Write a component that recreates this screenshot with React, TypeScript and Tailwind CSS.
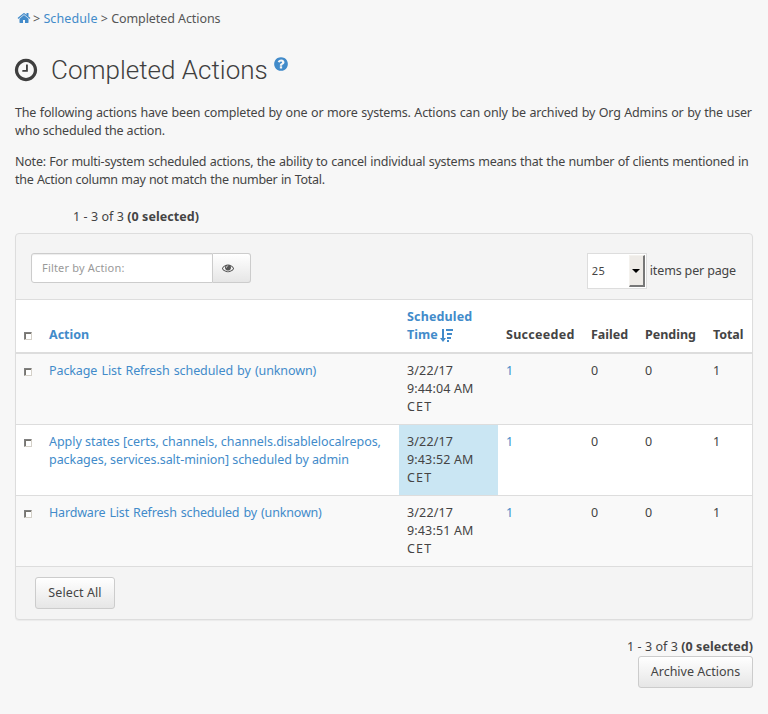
import React from "react";

const link = "text-[#428bca]";

function Fa({ d, className }: { d: string; className: string }) {
  return (
    <svg viewBox="0 0 1792 1792" fill="currentColor" className={className}>
      <path d={d} />
    </svg>
  );
}

const HOME =
  "M1472 992v480q0 26-19 45t-45 19h-384v-384h-256v384h-384q-26 0-45-19t-19-45v-480q0-1 .5-3t.5-3l575-474 575 474q1 2 1 6zm223-69l-62 74q-8 9-21 11h-3q-13 0-21-7l-692-577-692 577q-12 8-24 7-13-2-21-11l-62-74q-8-10-7-23.5t11-21.5l719-599q32-26 76-26t76 26l244 204v-195q0-14 9-23t23-9h192q14 0 23 9t9 23v408l219 182q10 8 11 21.5t-7 23.5z";
const CLOCK =
  "M1024 544v448q0 14-9 23t-23 9h-320q-14 0-23-9t-9-23v-64q0-14 9-23t23-9h224v-352q0-14 9-23t23-9h64q14 0 23 9t9 23zm416 352q0-148-73-273t-198-198-273-73-273 73-198 198-73 273 73 273 198 198 273 73 273-73 198-198 73-273zm224 0q0 209-103 385.5t-279.5 279.5-385.5 103-385.5-103-279.5-279.5-103-385.5 103-385.5 279.5-279.5 385.5-103 385.5 103 279.5 279.5 103 385.5z";
const HELP =
  "M1024 1376v-192q0-14-9-23t-23-9h-192q-14 0-23 9t-9 23v192q0 14 9 23t23 9h192q14 0 23-9t9-23zm256-672q0-88-55.5-163t-138.5-116-170-41q-243 0-371 213-15 24 8 42l132 100q7 6 19 6 16 0 25-12 53-68 86-92 34-24 86-24 48 0 85.5 26t37.5 59q0 38-20 61t-68 45q-63 28-115.5 86.5t-52.5 125.5v36q0 14 9 23t23 9h192q14 0 23-9t9-23q0-19 21.5-49.5t54.5-49.5q32-18 49-28.5t46-35 44.5-48 28-60.5 12.5-81zm384 192q0 209-103 385.5t-279.5 279.5-385.5 103-385.5-103-279.5-279.5-103-385.5 103-385.5 279.5-279.5 385.5-103 385.5 103 279.5 279.5 103 385.5z";
const EYE =
  "M1664 960q-152-236-381-353 61 104 61 225 0 185-131.5 316.5t-316.5 131.5-316.5-131.5-131.5-316.5q0-121 61-225-229 117-381 353 133 205 333.5 326.5t434.5 121.5 434.5-121.5 333.5-326.5zm-720-384q0-20-14-34t-34-14q-125 0-214.5 89.5t-89.5 214.5q0 20 14 34t34 14 34-14 14-34q0-86 61-147t147-61q20 0 34-14t14-34zm848 384q0 34-20 69-140 230-376.5 368.5t-499.5 138.5-499.5-139-376.5-368q-20-35-20-69t20-69q140-229 376.5-368t499.5-139 499.5 139 376.5 368q20 35 20 69z";

function Check() {
  return (
    <span className="block size-2 border border-[#d4d0c8] border-t-[#808080] border-l-[#808080] bg-white shadow-[inset_1px_1px_0_#77756f]" />
  );
}

const cols = "grid grid-cols-[25px_358px_99px_85px_54px_68px_47px]";

function Row({
  lines,
  time,
  shade,
  mark,
}: {
  lines: { text: string; spacing: string }[];
  time: string;
  shade?: boolean;
  mark?: boolean;
}) {
  return (
    <div className={`${cols} h-[71px] border-b border-[#ddd] ${shade ? "bg-[#f9f9f9]" : "bg-white"}`}>
      <div className="pt-[14px] pl-2">
        <Check />
      </div>
      <div className={`pt-2 pl-2 ${link}`}>
        {lines.map((l) => (
          <div key={l.text} className={l.spacing}>
            {l.text}
          </div>
        ))}
      </div>
      <div className={`pt-2 pl-2 tracking-[0.15px] ${mark ? "bg-[#cae6f3]" : ""}`}>
        <div>3/22/17</div>
        <div>{time} AM</div>
        <div className="tracking-[1.2px]">CET</div>
      </div>
      <div className={`pt-2 pl-2 ${link}`}>1</div>
      <div className="pt-2 pl-2">0</div>
      <div className="pt-2 pl-2">0</div>
      <div className="pt-2 pl-2">1</div>
    </div>
  );
}

const button =
  "flex h-8 items-center justify-center rounded-[3px] border border-[#ccc] bg-linear-to-b from-white to-[#e6e6e6] text-[#444] shadow-[inset_0_1px_0_#fff]";

export default function App() {
  return (
    <div className="h-[714px] w-[768px] bg-[#f7f7f7] px-[15px] font-['Noto_Sans',sans-serif] text-[12.5px] leading-[18px] whitespace-nowrap text-[#444]">
      <nav className="flex h-7 items-end pl-[2px] text-[#555]">
        <Fa d={HOME} className={`mb-[3px] size-[14px] ${link}`} />
        <span className="ml-[2px]">
          &gt; <a className={`${link} tracking-[0.1px]`}>Schedule</a> &gt; <span className="tracking-[-0.08px]">Completed Actions</span>
        </span>
      </nav>
      <h1 className="mt-[25px] flex h-9 font-['Roboto',sans-serif] text-[26px] leading-[35px] font-light text-[#3f3f3f]">
        <Fa d={CLOCK} className="mt-1 -ml-[2px] size-[26px]" />
        <span className="ml-3">Completed Actions</span>
        <Fa d={HELP} className={`mt-[3px] ml-[5px] size-4 ${link}`} />
      </h1>
      <div className="mt-[15px]">
        <div className="tracking-[-0.165px] [word-spacing:0.5px]">
          The following actions have been completed by one or more systems. Actions can only be archived by Org Admins or by the user
        </div>
        <div className="tracking-[-0.15px]">who scheduled the action.</div>
      </div>
      <div className="mt-[13px]">
        <div className="tracking-[-0.23px] [word-spacing:0.5px]">
          Note: For multi-system scheduled actions, the ability to cancel individual systems means that the number of clients mentioned in
        </div>
        <div className="tracking-[-0.29px] [word-spacing:0.5px]">the Action column may not match the number in Total.</div>
      </div>
      <div className="mt-[19px] pl-[58px] tracking-[0.06px]">
        1 - 3 of 3 <b>(0 selected)</b>
      </div>
      <section className="mt-[7px] h-[387px] w-[738px] rounded-[4px] border border-[#ddd] bg-[#f4f4f4] shadow-[0_1px_1px_rgba(0,0,0,0.05)]">
        <div className="flex h-[66px] items-start justify-between border-b border-[#ddd] pt-[19px] pr-4 pl-[15px]">
          <div className="flex h-[30px] text-[11px]">
            <div className="flex w-[182px] items-center rounded-l-[3px] border border-[#ccc] bg-white pl-[10px] tracking-[0.18px] text-[#999] shadow-[inset_0_1px_1px_rgba(0,0,0,0.075)]">
              Filter by Action:
            </div>
            <div className="flex w-[38px] items-center rounded-r-[3px] border border-l-0 border-[#ccc] bg-linear-to-b from-white to-[#e6e6e6] pl-[9px]">
              <Fa d={EYE} className="size-3 text-[#555]" />
            </div>
          </div>
          <div className="flex items-center">
            <div className="flex h-9 w-[60px] items-center justify-between border border-[#ddd] bg-white pr-[1px] pl-1 text-[11px]">
              <span className="tracking-[0.3px]">25</span>
              <span className="flex h-8 w-4 items-center justify-center border-t border-r-2 border-b-2 border-l border-t-[#f4f2ee] border-r-[#777] border-b-[#777] border-l-[#f4f2ee] bg-[#eeebe7]">
                <span className="border-x-4 border-t-4 border-x-transparent border-t-black" />
              </span>
            </div>
            <span className="ml-[3px] tracking-[-0.15px]">items per page</span>
          </div>
        </div>
        <div className={`${cols} h-[54px] border-b-2 border-[#ddd] bg-white font-bold`}>
          <div className="pt-8 pl-2">
            <Check />
          </div>
          <div className={`pt-[26px] pl-2 ${link}`}>Action</div>
          <div className={`pt-2 pl-2 ${link}`}>
            <div className="tracking-[0.15px]">Scheduled</div>
            <div className="flex items-center">
              Time
              <svg viewBox="0 0 13 13" className="ml-[2px] size-[13px]" fill="currentColor">
                <path d="M2 0h2v9h2l-3 4-3-4h2zM6 0h7v2H6zM7 4h5v2H7zM7 8h4v2H7zM7 11h2v2H7z" />
              </svg>
            </div>
          </div>
          <div className="pt-[26px] pl-2 tracking-[0.28px]">Succeeded</div>
          <div className="pt-[26px] pl-2">Failed</div>
          <div className="pt-[26px] pl-2">Pending</div>
          <div className="pt-[26px] pl-2 tracking-[-0.1px]">Total</div>
        </div>
        <Row
          shade
          lines={[{ text: "Package List Refresh scheduled by (unknown)", spacing: "tracking-[-0.1px] [word-spacing:1px]" }]}
          time="9:44:04"
        />
        <Row
          mark
          lines={[
            { text: "Apply states [certs, channels, channels.disablelocalrepos,", spacing: "tracking-[-0.04px]" },
            { text: "packages, services.salt-minion] scheduled by admin", spacing: "tracking-[-0.06px]" },
          ]}
          time="9:43:52"
        />
        <Row
          shade
          lines={[{ text: "Hardware List Refresh scheduled by (unknown)", spacing: "tracking-[-0.17px] [word-spacing:1px]" }]}
          time="9:43:51"
        />
        <div className="pt-[10px] pl-[19px]">
          <div className={`${button} w-20 tracking-[0.1px]`}>Select All</div>
        </div>
      </section>
      <footer className="flex flex-col items-end pt-[18px]">
        <div className="tracking-[0.06px]">
          1 - 3 of 3 <b>(0 selected)</b>
        </div>
        <div className={`${button} w-[115px]`}>Archive Actions</div>
      </footer>
    </div>
  );
}
